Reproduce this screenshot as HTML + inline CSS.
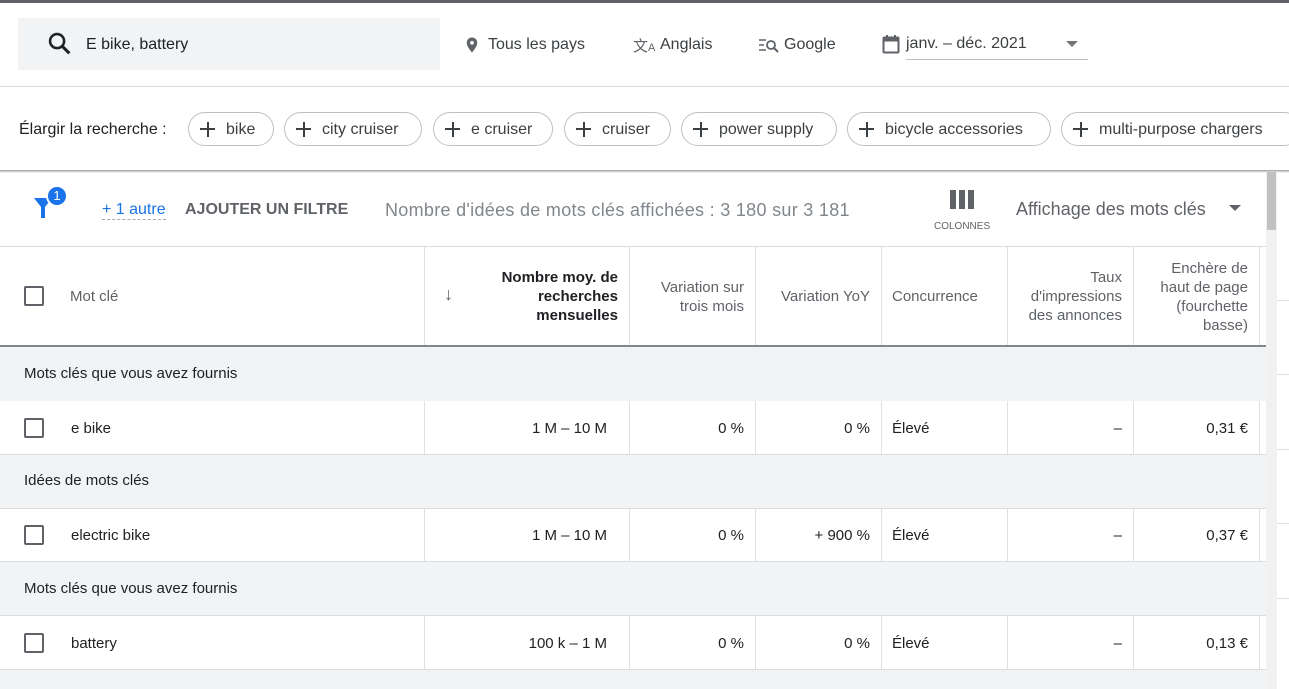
<!DOCTYPE html>
<html><head><meta charset="utf-8"><style>
*{margin:0;padding:0;box-sizing:border-box}
body{width:1289px;height:689px;overflow:hidden;background:#fff;font-family:"Liberation Sans",Arial,sans-serif;color:#3c4043;position:relative}
.a{position:absolute}
.chip{position:absolute;top:112px;height:34px;border:1px solid #bdc1c6;border-radius:17px;font-size:16px;color:#3c4043;line-height:34px;padding-left:37px;white-space:nowrap}
.chip:before{content:"";position:absolute;left:11px;top:15px;width:15px;height:2px;background:#3c4043}
.chip:after{content:"";position:absolute;left:17.5px;top:8.5px;width:2px;height:15px;background:#3c4043}
.vl{position:absolute;width:1px;background:#e0e0e0}
.hd{position:absolute;font-size:15px;color:#5f6368;line-height:19px}
.cb{position:absolute;left:24px;width:20px;height:20px;border:2px solid #5f6368;border-radius:2px}
.grp{position:absolute;left:0;width:1266px;background:#f1f3f4;font-size:15px;color:#202124;padding-left:24px}
.row{position:absolute;left:0;width:1266px;background:#fff;font-size:15px;color:#202124}
.r{position:absolute;text-align:right}
.hl{position:absolute;left:0;width:1266px;height:1px;background:#dadce0}
</style></head><body>
<div class="a" style="left:0;top:0;width:1289px;height:3px;background:#5f6368"></div>
<div class="a" style="left:18px;top:18px;width:422px;height:52px;background:#f1f3f4"></div>
<svg class="a" style="left:46px;top:30px" width="28" height="28" viewBox="0 0 24 24"><circle cx="9.5" cy="9.5" r="6" fill="none" stroke="#202124" stroke-width="2.2"/><path d="M14 14l6 6" stroke="#202124" stroke-width="2.6"/></svg>
<div class="a" style="left:86px;top:36px;font-size:16px;color:#202124">E bike, battery</div>
<svg class="a" style="left:463px;top:35px" width="18" height="20" viewBox="0 0 24 24"><path d="M12 2C8.1 2 5 5.1 5 9c0 5.2 7 13 7 13s7-7.8 7-13c0-3.9-3.1-7-7-7zm0 9.5a2.5 2.5 0 110-5 2.5 2.5 0 010 5z" fill="#5f6368"/></svg>
<div class="a" style="left:488px;top:36px;font-size:16px">Tous les pays</div>
<div class="a" style="left:633px;top:35px;font-size:15px;color:#5f6368">文<span style="font-size:11px">A</span></div>
<div class="a" style="left:660px;top:36px;font-size:16px">Anglais</div>
<svg class="a" style="left:759px;top:37px" width="20" height="16" viewBox="0 0 20 16"><path d="M0 3h7M0 8h5M0 13h7" stroke="#5f6368" stroke-width="1.6"/><circle cx="12" cy="8" r="4" fill="none" stroke="#5f6368" stroke-width="1.8"/><path d="M15 11l4 4" stroke="#5f6368" stroke-width="2"/></svg>
<div class="a" style="left:784px;top:36px;font-size:16px">Google</div>
<svg class="a" style="left:882px;top:34px" width="18" height="20" viewBox="0 0 18 20"><rect x="1.5" y="3.5" width="15" height="15" rx="1" fill="none" stroke="#5f6368" stroke-width="2"/><rect x="1.5" y="3.5" width="15" height="4" fill="#5f6368"/><path d="M5 1v4M13 1v4" stroke="#5f6368" stroke-width="2"/></svg>
<div class="a" style="left:906px;top:35px;font-size:16px">janv. – déc. 2021</div>
<div class="a" style="left:1066px;top:41px;border-left:6px solid transparent;border-right:6px solid transparent;border-top:6px solid #757575"></div>
<div class="a" style="left:906px;top:59px;width:182px;height:1px;background:#bdc1c6"></div>
<div class="a" style="left:0;top:86px;width:1289px;height:1px;background:#dadce0"></div>
<div class="a" style="left:19px;top:121px;font-size:16px;color:#202124">Élargir la recherche :</div>
<div class="chip" style="left:188px;width:86px">bike</div>
<div class="chip" style="left:284px;width:138px">city cruiser</div>
<div class="chip" style="left:433px;width:120px">e cruiser</div>
<div class="chip" style="left:564px;width:107px">cruiser</div>
<div class="chip" style="left:681px;width:156px">power supply</div>
<div class="chip" style="left:847px;width:204px">bicycle accessories</div>
<div class="chip" style="left:1061px;width:240px">multi-purpose chargers</div>
<div class="a" style="left:0;top:170px;width:1289px;height:3px;background:linear-gradient(#9e9e9e,#fff)"></div>
<svg class="a" style="left:33px;top:194px" width="22" height="26" viewBox="0 0 22 26"><path d="M1 4h18l-7 9v11h-4V13z" fill="#1a73e8"/></svg>
<div class="a" style="left:46px;top:185px;width:22px;height:22px;border-radius:50%;background:#1a73e8;border:2px solid #fff;color:#fff;font-size:13px;text-align:center;line-height:18px">1</div>
<div class="a" style="left:102px;top:201px;font-size:16px;color:#1a73e8;border-bottom:1px dashed #aaa">+ 1 autre</div>
<div class="a" style="left:185px;top:201px;font-size:16px;font-weight:bold;color:#5f6368">AJOUTER UN FILTRE</div>
<div class="a" style="left:385px;top:200px;font-size:18px;color:#80868b;letter-spacing:0.3px">Nombre d'idées de mots clés affichées : 3 180 sur 3 181</div>
<div class="a" style="left:950px;top:190px;width:24px;height:19px;background:linear-gradient(90deg,#5f6368 0 6px,#fff 6px 9px,#5f6368 9px 15px,#fff 15px 18px,#5f6368 18px)"></div>
<div class="a" style="left:934px;top:221px;font-size:10px;color:#5f6368">COLONNES</div>
<div class="a" style="left:1016px;top:199px;font-size:18px;color:#5f6368">Affichage des mots clés</div>
<div class="a" style="left:1229px;top:205px;border-left:6px solid transparent;border-right:6px solid transparent;border-top:6px solid #5f6368"></div>
<div class="a" style="left:1266px;top:172px;width:11px;height:517px;background:#f1f1f1"></div>
<div class="a" style="left:1267px;top:172px;width:9px;height:58px;background:#c1c1c1"></div>
<div class="a" style="left:1277px;top:300px;width:12px;height:1px;background:#e0e0e0"></div>
<div class="a" style="left:1277px;top:374px;width:12px;height:1px;background:#e0e0e0"></div>
<div class="a" style="left:1277px;top:449px;width:12px;height:1px;background:#e0e0e0"></div>
<div class="a" style="left:1277px;top:523px;width:12px;height:1px;background:#e0e0e0"></div>
<div class="a" style="left:1277px;top:598px;width:12px;height:1px;background:#e0e0e0"></div>
<div class="hl" style="top:246px"></div>
<div class="cb" style="top:286px"></div>
<div class="hd" style="left:70px;top:287px">Mot clé</div>
<div class="hd" style="left:444px;top:285px;font-size:18px">↓</div>
<div class="hd r" style="left:460px;width:158px;top:268px;color:#202124;font-weight:bold">Nombre moy. de recherches mensuelles</div>
<div class="hd r" style="left:640px;width:104px;top:278px">Variation sur trois mois</div>
<div class="hd r" style="left:760px;width:110px;top:287px">Variation YoY</div>
<div class="hd" style="left:892px;top:287px">Concurrence</div>
<div class="hd r" style="left:1010px;width:112px;top:268px">Taux d'impressions des annonces</div>
<div class="hd r" style="left:1140px;width:108px;top:259px">Enchère de haut de page (fourchette basse)</div>
<div class="a" style="left:0;top:345px;width:1266px;height:2px;background:#80868b"></div>
<div class="grp" style="top:347px;height:54px;line-height:54px">Mots clés que vous avez fournis</div>
<div class="row" style="top:401px;height:54px"></div>
<div class="hl" style="top:454px"></div>
<div class="grp" style="top:455px;height:54px;line-height:52px">Idées de mots clés</div>
<div class="hl" style="top:508px"></div>
<div class="row" style="top:509px;height:53px"></div>
<div class="hl" style="top:561px"></div>
<div class="grp" style="top:562px;height:54px;line-height:54px">Mots clés que vous avez fournis</div>
<div class="hl" style="top:615px"></div>
<div class="row" style="top:616px;height:53px"></div>
<div class="hl" style="top:669px"></div>
<div class="a" style="left:0;top:670px;width:1266px;height:19px;background:#f1f3f4"></div>
<div class="vl" style="left:424px;top:247px;height:98px"></div>
<div class="vl" style="left:629px;top:247px;height:98px"></div>
<div class="vl" style="left:755px;top:247px;height:98px"></div>
<div class="vl" style="left:881px;top:247px;height:98px"></div>
<div class="vl" style="left:1007px;top:247px;height:98px"></div>
<div class="vl" style="left:1133px;top:247px;height:98px"></div>
<div class="vl" style="left:1259px;top:247px;height:98px"></div>
<div class="vl" style="left:424px;top:401px;height:53px"></div><div class="vl" style="left:629px;top:401px;height:53px"></div><div class="vl" style="left:755px;top:401px;height:53px"></div><div class="vl" style="left:881px;top:401px;height:53px"></div><div class="vl" style="left:1007px;top:401px;height:53px"></div><div class="vl" style="left:1133px;top:401px;height:53px"></div><div class="vl" style="left:1259px;top:401px;height:53px"></div>
<div class="vl" style="left:424px;top:509px;height:52px"></div><div class="vl" style="left:629px;top:509px;height:52px"></div><div class="vl" style="left:755px;top:509px;height:52px"></div><div class="vl" style="left:881px;top:509px;height:52px"></div><div class="vl" style="left:1007px;top:509px;height:52px"></div><div class="vl" style="left:1133px;top:509px;height:52px"></div><div class="vl" style="left:1259px;top:509px;height:52px"></div>
<div class="vl" style="left:424px;top:616px;height:53px"></div><div class="vl" style="left:629px;top:616px;height:53px"></div><div class="vl" style="left:755px;top:616px;height:53px"></div><div class="vl" style="left:881px;top:616px;height:53px"></div><div class="vl" style="left:1007px;top:616px;height:53px"></div><div class="vl" style="left:1133px;top:616px;height:53px"></div><div class="vl" style="left:1259px;top:616px;height:53px"></div>
<div style="font-size:15px;color:#202124">
<div class="cb" style="top:418px"></div><div class="a" style="left:71px;top:420px">e bike</div>
<div class="a r" style="left:440px;width:167px;top:420px">1 M – 10 M</div>
<div class="a r" style="left:640px;width:104px;top:420px">0 %</div>
<div class="a r" style="left:760px;width:110px;top:420px">0 %</div>
<div class="a" style="left:892px;top:420px">Élevé</div>
<div class="a r" style="left:1010px;width:112px;top:420px">–</div>
<div class="a r" style="left:1140px;width:108px;top:420px">0,31 €</div>
<div class="cb" style="top:525px"></div><div class="a" style="left:71px;top:527px">electric bike</div>
<div class="a r" style="left:440px;width:167px;top:527px">1 M – 10 M</div>
<div class="a r" style="left:640px;width:104px;top:527px">0 %</div>
<div class="a r" style="left:760px;width:110px;top:527px">+ 900 %</div>
<div class="a" style="left:892px;top:527px">Élevé</div>
<div class="a r" style="left:1010px;width:112px;top:527px">–</div>
<div class="a r" style="left:1140px;width:108px;top:527px">0,37 €</div>
<div class="cb" style="top:633px"></div><div class="a" style="left:71px;top:635px">battery</div>
<div class="a r" style="left:440px;width:167px;top:635px">100 k – 1 M</div>
<div class="a r" style="left:640px;width:104px;top:635px">0 %</div>
<div class="a r" style="left:760px;width:110px;top:635px">0 %</div>
<div class="a" style="left:892px;top:635px">Élevé</div>
<div class="a r" style="left:1010px;width:112px;top:635px">–</div>
<div class="a r" style="left:1140px;width:108px;top:635px">0,13 €</div>
</div>
</body></html>
